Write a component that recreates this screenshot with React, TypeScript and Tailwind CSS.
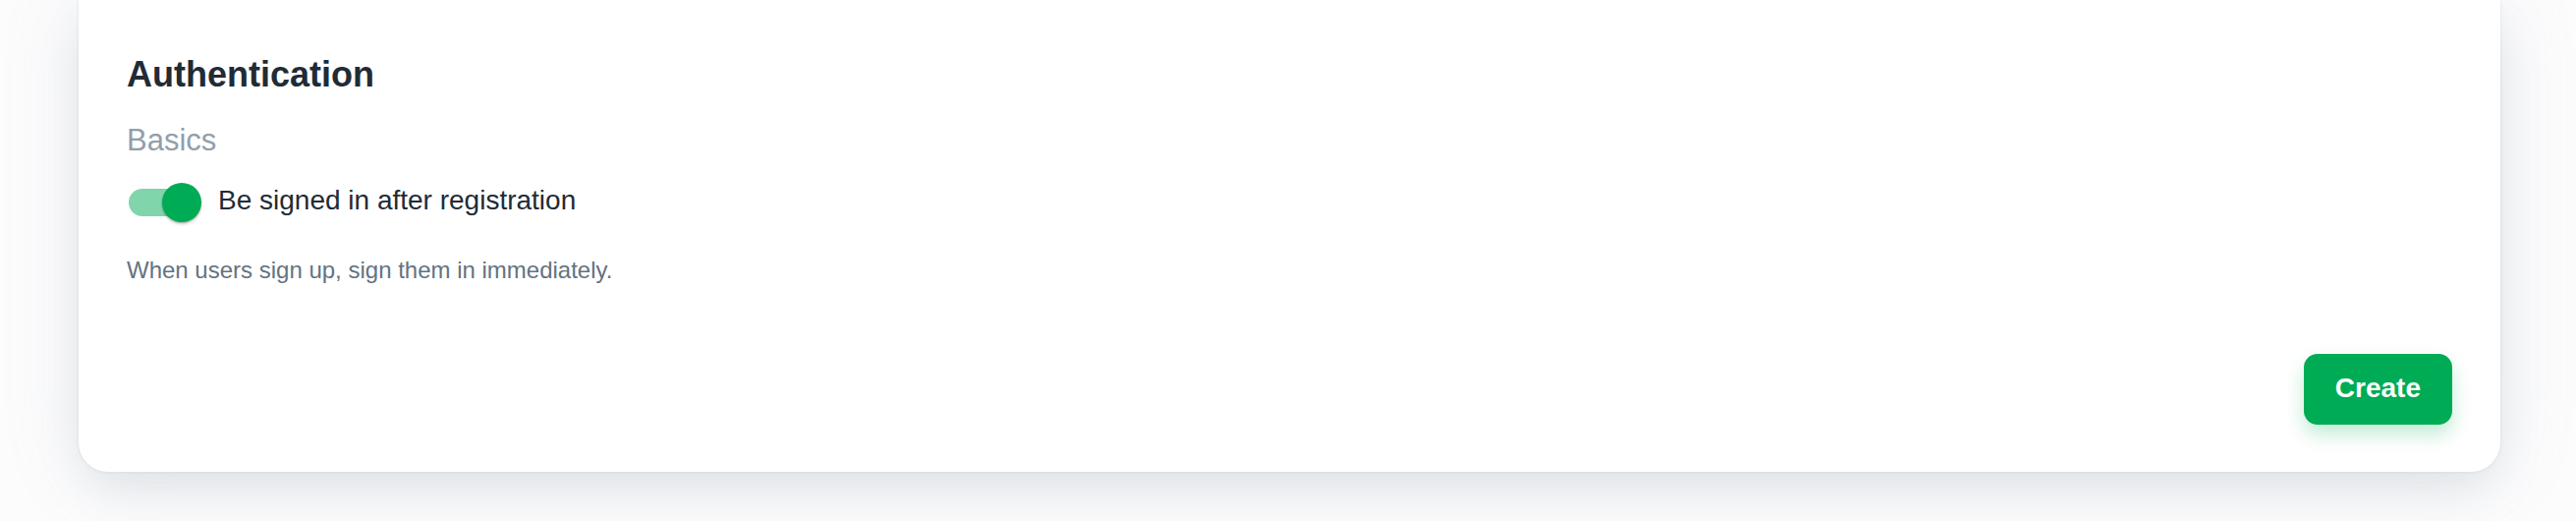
import React from "react";

export default function App() {
  return (
    <div
      className="w-[2622px] h-[530px] overflow-hidden bg-[#fcfcfd] px-[80px]"
      style={{ fontFamily: '"Liberation Sans", Arial, sans-serif' }}
    >
      <div className="bg-white rounded-b-[30px] pt-[54px] px-[49px] pb-[48px] shadow-[0_0_3px_0_rgba(145,158,171,0.25),0_0_80px_0_rgba(145,158,171,0.16),0_24px_48px_-8px_rgba(145,158,171,0.2)] mr-[-3px]">
        <h2 className="text-[36px] leading-[44px] font-bold text-[#212b36]">Authentication</h2>
        <div className="mt-[27px] text-[31px] leading-[36px] text-[#919eab]">Basics</div>
        <div className="mt-[25px] flex items-center h-[40px] pl-[2px]">
          <div className="relative w-[74px] h-[40px] shrink-0">
            <div className="absolute left-0 top-[6px] w-[68px] h-[28px] rounded-full bg-[#80d5aa]" />
            <div className="absolute left-[34px] top-0 w-[40px] h-[40px] rounded-full bg-[#00ab55] shadow-[0_2px_3px_rgba(0,0,0,0.2),0_1px_1px_rgba(0,0,0,0.14)]" />
          </div>
          <span className="ml-[17px] text-[28px] leading-[40px] text-[#212b36] -translate-y-[2px]">
            Be signed in after registration
          </span>
        </div>
        <p className="mt-[31px] text-[24px] leading-[36px] text-[#637381]">
          When users sign up, sign them in immediately.
        </p>
        <div className="mt-[67px] flex justify-end">
          <button className="h-[72px] px-[32px] rounded-[14px] bg-[#00ab55] text-white text-[28px] leading-[32px] font-bold shadow-[0_10px_20px_0_rgba(0,171,85,0.24)]">
            <span className="block -translate-y-[1px]">Create</span>
          </button>
        </div>
      </div>
    </div>
  );
}
